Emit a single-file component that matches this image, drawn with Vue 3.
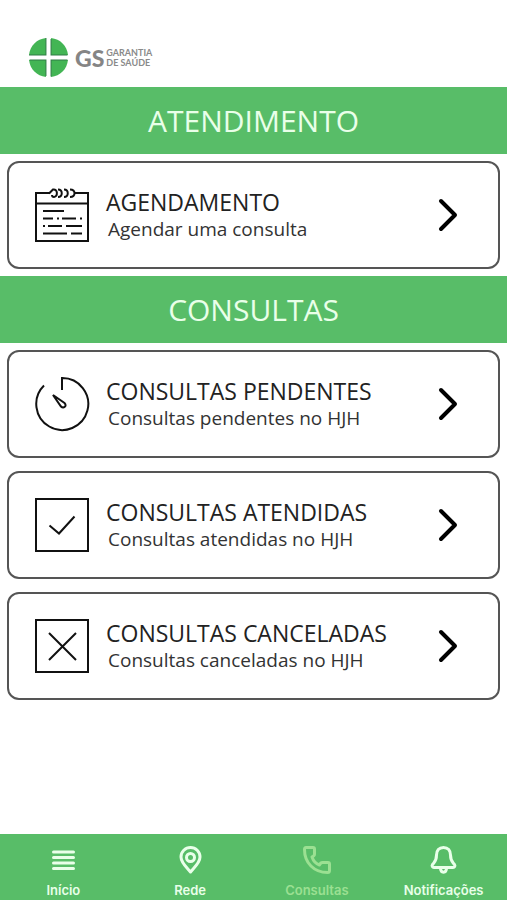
<template>
  <div class="page">
    <header class="header">
      <svg class="logo-mark" viewBox="0 0 40 40" aria-hidden="true">
        <g fill="#43b554">
          <path d="M17.500 1v16.500H1C2 8.500 8.500 2 17.500 1z" />
          <path d="M22.500 1v16.500H39C38 8.500 31.500 2 22.500 1z" />
          <path d="M17.500 39V22.500H1C2 31.500 8.500 38 17.500 39z" />
          <path d="M22.500 39V22.500H39C38 31.500 31.500 38 22.500 39z" />
        </g>
        <path
          d="M17.500 1v16.500H1M38.500 17.500h-16V2M1.500 22.500h16V38M22.500 38.500v-16h16"
          fill="none"
          stroke="#2f7d45"
        />
      </svg>
      <span class="logo-gs">GS</span>
      <span class="logo-name">GARANTIA<br />DE SAÚDE</span>
    </header>

    <main class="content">
      <section v-for="section in sections" :key="section.title">
        <h2 class="section-title">{{ section.title }}</h2>
        <div class="card-list">
          <button v-for="item in section.items" :key="item.title" type="button" class="card">
            <svg class="card-icon" viewBox="0 0 56 56" aria-hidden="true">
              <template v-if="item.icon === 'calendar'">
                <path d="M16 6H2v48h52V6H41M2 16.500h52" />
                <path d="M15 6.500l4-4c5-1 5 7 1 7.500q-2 0-2-2M24 2.500c5 0 5 7.500 0 7.500M30 2.500c5 0 5 7.500 0 7.500M36 2.500c6 0 6 7.500 0 7.500" />
                <path d="M9 24h21M9 31.500h10M23 31.500h2M28 31.500h14M46 31.500h2M9 39h2M14 39h14M32 39h16M9 46.500h24M37 46.500h11" />
              </template>
              <template v-else-if="item.icon === 'clock'">
                <path d="M10 9.500A26 26 0 1 0 28 2V14" />
                <path d="M19 19l11.500 8c3 3-1 6-3.500 3.500z" />
              </template>
              <template v-else>
                <rect x="2" y="2" width="52" height="52" />
                <path v-if="item.icon === 'check'" d="M15.500 28.500l9.500 8L40.500 19.500" />
                <path v-else d="M15 15l27 27M42 15L15 42" />
              </template>
            </svg>
            <span class="card-text">
              <span class="card-title">{{ item.title }}</span>
              <span class="card-subtitle">{{ item.subtitle }}</span>
            </span>
            <svg class="card-arrow" viewBox="0 0 20 34" aria-hidden="true">
              <path d="M3 3l14 14L3 31" />
            </svg>
          </button>
        </div>
      </section>
    </main>

    <nav class="tabs">
      <a v-for="tab in tabs" :key="tab.label" href="#" class="tab" :class="{ active: tab.active }">
        <svg class="tab-icon" viewBox="0 0 28 28" aria-hidden="true">
          <path v-if="tab.icon === 'list'" class="bars" d="M4.500 6h20M4.500 11.500h20M4.500 17h20M4.500 22.500h20" />
          <template v-else-if="tab.icon === 'pin'">
            <path d="M14.500 26C11.500 22 5 17 5 11a9.500 9.500 0 0 1 19 0c0 6-6.500 11-9.500 15z" />
            <circle cx="14.500" cy="11.500" r="4" />
          </template>
          <path
            v-else-if="tab.icon === 'phone'"
            d="M3 1.500h7q1.500 0 1.500 1.500v5q0 2-2.500 3 2 6 7.500 8 1-2.500 3-2.500H25q1.500 0 1.500 1.500v6.500q0 2-2 2C11 26.500 1.500 17 1.500 3.500q0-2 1.500-2z"
          />
          <template v-else>
            <path d="M13.500 1.500c-4.500 0-7 3-7 7.500 0 6-1.500 6.500-4 9.500-1 1.500 0 3 1.500 3h19c1.500 0 2.500-1.500 1.500-3-2.500-3-4-3.500-4-9.500 0-4.500-2.500-7.500-7-7.500z" />
            <path d="M10.500 22c0 5.500 6 5.500 6 0" />
          </template>
        </svg>
        <span>{{ tab.label }}</span>
      </a>
    </nav>
  </div>
</template>

<script setup>
const sections = [
  {
    title: 'ATENDIMENTO',
    items: [{ icon: 'calendar', title: 'AGENDAMENTO', subtitle: 'Agendar uma consulta' }]
  },
  {
    title: 'CONSULTAS',
    items: [
      { icon: 'clock', title: 'CONSULTAS PENDENTES', subtitle: 'Consultas pendentes no HJH' },
      { icon: 'check', title: 'CONSULTAS ATENDIDAS', subtitle: 'Consultas atendidas no HJH' },
      { icon: 'cross', title: 'CONSULTAS CANCELADAS', subtitle: 'Consultas canceladas no HJH' }
    ]
  }
]

const tabs = [
  { icon: 'list', label: 'Início', active: false },
  { icon: 'pin', label: 'Rede', active: false },
  { icon: 'phone', label: 'Consultas', active: true },
  { icon: 'bell', label: 'Notificações', active: false }
]
</script>

<style>
body {
  margin: 0;
  background-color: #fff;
}
</style>

<style scoped>
.page {
  display: flex;
  flex-direction: column;
  min-height: 100vh;
  font-family: 'Open Sans', 'Noto Sans', sans-serif;
  color: #222;
}

.header {
  display: flex;
  align-items: center;
  box-sizing: border-box;
  height: 87px;
  padding: 28px 28px 0;
}

.logo-mark {
  width: 41px;
  height: 41px;
}

.logo-gs {
  margin-left: 6px;
  font-family: Lato, sans-serif;
  font-size: 23px;
  font-weight: 900;
  color: #858585;
}

.logo-name {
  margin-left: 2px;
  font-family: Lato, sans-serif;
  font-size: 9px;
  line-height: 10px;
  font-weight: 700;
  color: #8a8a8a;
}

.content {
  flex: 1;
}

.section-title {
  margin: 0;
  background-color: #58bd68;
  color: #e9ffe9;
  font-size: 30px;
  font-weight: 400;
  line-height: 67px;
  text-align: center;
}

.card-list {
  display: flex;
  flex-direction: column;
  gap: 13px;
  padding: 7px;
}

.card {
  display: flex;
  align-items: center;
  box-sizing: border-box;
  width: 100%;
  height: 108px;
  padding: 0 40px 0 25px;
  border: 2px solid #555;
  border-radius: 12px;
  background-color: #fff;
  color: inherit;
  font-family: inherit;
  text-align: left;
}

.card-icon {
  flex: none;
  width: 56px;
  height: 56px;
  fill: none;
  stroke: #111;
  stroke-width: 2;
}

.card-text {
  flex: 1;
  padding-left: 16px;
}

.card-title,
.card-subtitle {
  display: block;
}

.card-title {
  font-size: 23px;
  line-height: 28px;
}

.card-subtitle {
  padding-left: 2px;
  font-size: 19px;
  line-height: 27px;
  color: #333;
}

.card-arrow {
  flex: none;
  width: 20px;
  height: 34px;
  fill: none;
  stroke: #000;
  stroke-width: 4;
  stroke-linecap: round;
  stroke-linejoin: round;
}

.tabs {
  position: sticky;
  bottom: 0;
  display: flex;
  box-sizing: border-box;
  height: 66px;
  padding-top: 12px;
  background-color: #58bd68;
}

.tab {
  flex: 1 1 0;
  display: flex;
  flex-direction: column;
  align-items: center;
  gap: 8px;
  color: #e9ffe9;
  font-family: Inter, sans-serif;
  font-size: 13px;
  font-weight: 600;
  line-height: 16px;
  text-decoration: none;
}

.tab.active {
  color: #9be092;
}

.tab-icon {
  width: 28px;
  height: 28px;
  fill: none;
  stroke: currentColor;
  stroke-width: 3;
  stroke-linejoin: round;
}

.bars {
  stroke-linecap: round;
}
</style>
